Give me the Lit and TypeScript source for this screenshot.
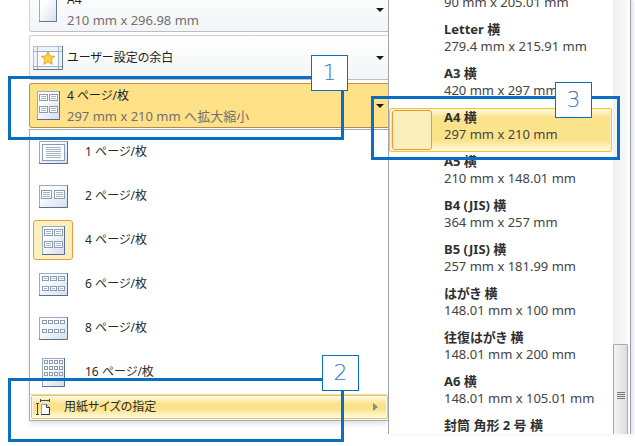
import { LitElement, html, svg, css, nothing } from "lit";
import { customElement, property } from "lit/decorators.js";
import { classMap } from "lit/directives/class-map.js";

interface Layout {
  pages: number;
  cols: number;
  rows: number;
  tall?: boolean;
}

const LAYOUTS: Layout[] = [
  { pages: 1, cols: 1, rows: 1 },
  { pages: 2, cols: 2, rows: 1 },
  { pages: 4, cols: 2, rows: 2, tall: true },
  { pages: 6, cols: 3, rows: 2 },
  { pages: 8, cols: 4, rows: 2 },
  { pages: 16, cols: 4, rows: 3, tall: true },
];

const PAPERS: [string, string][] = [
  ["", "90 mm x 205.01 mm"],
  ["Letter 横", "279.4 mm x 215.91 mm"],
  ["A3 横", "420 mm x 297 mm"],
  ["A4 横", "297 mm x 210 mm"],
  ["A5 横", "210 mm x 148.01 mm"],
  ["B4 (JIS) 横", "364 mm x 257 mm"],
  ["B5 (JIS) 横", "257 mm x 181.99 mm"],
  ["はがき 横", "148.01 mm x 100 mm"],
  ["往復はがき 横", "148.01 mm x 200 mm"],
  ["A6 横", "148.01 mm x 105.01 mm"],
  ["封筒 角形 2 号 横", ""],
];

/* Sheet thumbnail divided into cols x rows miniature pages. */
@customElement("sheet-icon")
export class SheetIcon extends LitElement {
  @property({ type: Number }) cols = 1;
  @property({ type: Number }) rows = 1;
  @property({ type: Boolean }) tall = false;

  static styles = css`
    :host { display: block; }
    svg { display: block; }
  `;

  private grid() {
    const { cols, tall } = this;
    if (cols === 2) {
      return tall
        ? { x0: 2, y0: 3, w: 8, h: 6, stepX: 10, stepY: 12 }
        : { x0: 2, y0: 5, w: 10, h: 8, stepX: 13, stepY: 12 };
    }
    if (cols === 3) return { x0: 3, y0: 3, w: 6, h: 4, stepX: 8, stepY: 10 };
    return tall
      ? { x0: 2, y0: 2, w: 3, h: 3, stepX: 5, stepY: 6 }
      : { x0: 3, y0: 3, w: 4, h: 3, stepX: 6, stepY: 9 };
  }

  private cells() {
    const { cols, rows } = this;
    if (cols === 1) {
      return svg`<rect x="3.5" y="3.5" width="22" height="16" fill="#fff" stroke="#8a9cb8"/>
        ${[6, 8, 10, 12, 14, 16].map((y) => svg`<path d="M7 ${y}.5H22" stroke="#a9b4c4"/>`)}`;
    }
    const { x0, y0, w, h, stepX, stepY } = this.grid();
    const out = [];
    for (let r = 0; r < rows; r++) {
      for (let c = 0; c < cols; c++) {
        const x = x0 + c * stepX;
        const y = y0 + r * stepY;
        out.push(svg`<rect x=${x + 0.5} y=${y + 0.5} width=${w} height=${h} fill="#fff" stroke="#8a9cb8"/>`);
        if (cols === 2) {
          for (let l = 2; l < h - 1; l += 2) {
            out.push(svg`<path d="M${x + 2} ${y + l + 0.5}h${w - 3}" stroke="#a9b4c4"/>`);
          }
        } else if (cols === 3) {
          out.push(svg`<path d="M${x + 2} ${y + 2.5}h3" stroke="#a9b4c4"/>`);
        }
      }
    }
    return out;
  }

  render() {
    const w = this.tall ? 23 : 29;
    const h = this.tall ? 29 : 23;
    return html`<svg width=${w} height=${h} viewBox="0 0 ${w} ${h}" aria-hidden="true">
      <defs>
        <linearGradient id="g" x1="0" y1="0" x2="1" y2="1">
          <stop offset="0.3" stop-color="#fdfeff" /><stop offset="1" stop-color="#d3ddec" />
        </linearGradient>
      </defs>
      <rect x="0.5" y="0.5" width=${w - 1} height=${h - 1} fill="url(#g)" stroke="#98aac4" />
      <path d="M${w - 0.5} 0V${h - 0.5}H0" fill="none" stroke="#5b7090" />
      ${this.cells()}
    </svg>`;
  }
}

@customElement("step-callout")
export class StepCallout extends LitElement {
  @property() step = "";

  static styles = css`
    :host {
      display: block;
      box-sizing: border-box;
      border: 3px solid #0a6fc0;
      pointer-events: none;
    }
    .tag {
      position: absolute;
      top: var(--tag-top);
      right: var(--tag-right);
      box-sizing: border-box;
      width: 37px;
      height: 36px;
      border: 1px solid #0a6fc0;
      background: #fff;
      color: #3b76c2;
      font: 200 22px/34px "DejaVu Sans", sans-serif;
      text-align: center;
    }
  `;

  render() {
    return html`<span class="tag">${this.step}</span>`;
  }
}

@customElement("app-root")
export class AppRoot extends LitElement {
  static styles = css`
    :host {
      display: block;
      background: #fff;
      color: #2b2b2b;
      font: 13px/20px "Noto Sans", "Noto Sans CJK JP", sans-serif;
      font-feature-settings: "palt";
    }
    .page {
      display: grid;
      grid-template-columns: 359fr 247fr;
      box-sizing: border-box;
      height: 100vh;
      min-height: 434px;
      padding: 0 0 12px 29px;
      overflow: hidden;
    }
    button {
      box-sizing: border-box;
      margin: 0;
      padding: 0;
      border: 0;
      background: none;
      color: inherit;
      font: inherit;
      font-feature-settings: inherit;
      text-align: left;
      white-space: nowrap;
    }
    .settings {
      display: flex;
      flex-direction: column;
      gap: 3px;
      margin-top: -13px;
    }
    .host { position: relative; }
    .field {
      display: flex;
      align-items: center;
      gap: 1px;
      width: 100%;
      height: 45px;
      border: 1px solid #cfd2da;
      border-bottom-color: #b9bdc8;
      border-right: 0;
      border-radius: 3px 0 0 3px;
      background: linear-gradient(#fff, #f3f4f6);
    }
    .field.open {
      border-color: #c98f3c;
      border-bottom-color: #b08a58;
      background: #ffe188;
    }
    .slot {
      display: flex;
      justify-content: center;
      width: 36px;
    }
    .words {
      display: flex;
      flex: 1;
      flex-direction: column;
    }
    .title, .choice, .more { font-size: 12px; }
    .field .words { color: #1e1e1e; }
    .field .sub { color: #707070; }
    .caret {
      margin-right: 4px;
      border: 4px solid transparent;
      border-top-color: #1a1a1a;
      border-bottom: 0;
    }
    .menu {
      display: flex;
      flex-direction: column;
      margin-top: -2px;
      padding: 0 0 1px;
      border: 1px solid #a4a9b3;
      border-right: 0;
      box-shadow: 0 4px 5px -1px #e2dfee;
    }
    .choice {
      display: flex;
      align-items: center;
      gap: 12px;
      height: 44px;
      padding-left: 3px;
    }
    .thumb {
      display: flex;
      align-items: center;
      justify-content: center;
      box-sizing: border-box;
      width: 40px;
      height: 40px;
    }
    .thumb.on, .swatch {
      border: 1px solid #ea9a3e;
      border-radius: 3px;
      background: #fbefbd;
    }
    .more {
      display: flex;
      align-items: center;
      gap: 13px;
      width: 100%;
      height: 24px;
      padding: 0 9px 0 4px;
      border: 1px solid #f3c444;
      border-radius: 2px;
      background: linear-gradient(#fffbe6, #fbe38c 35%, #fbe38c 60%, #fffbe0);
      box-shadow: inset 0 0 0 1px #fffbe6;
    }
    .bottom {
      padding-left: 1px;
      border-top: 1px solid #dcdee2;
    }
    .more .label { flex: 1; }
    .right {
      border: 4px solid transparent;
      border-left: 5px solid #8a8a86;
      border-right: 0;
    }
    .papers {
      display: flex;
      gap: 1px;
      min-height: 0;
      margin-right: 4px;
      padding-right: 2px;
      border-left: 1px solid #a0a5b0;
      border-right: 1px solid #9a9dac;
      box-shadow: 3px 0 3px #e6e6f4;
    }
    .list {
      flex: 1;
      min-width: 0;
      margin: -24px 0 0;
      padding: 0;
      list-style: none;
    }
    .clip {
      display: flex;
      flex: 1;
      min-width: 0;
      height: 100%;
      clip-path: inset(0 -40px 0 -40px);
    }
    .paper {
      display: flex;
      gap: 12px;
      width: 100%;
      height: 44px;
      padding: 0 2px;
      border: 1px solid transparent;
      border-radius: 2px;
      color: #444;
      line-height: 17px;
    }
    .paper.on {
      border-color: #f3c444;
      background: linear-gradient(#fffbe6, #fbe38c 20%, #fbe38c 75%, #fffbe0);
      box-shadow: inset 0 0 0 1px #fff3c0;
    }
    .paper .words { align-self: flex-start; }
    .swatch, .blank {
      box-sizing: border-box;
      align-self: center;
      width: 40px;
      height: 40px;
    }
    .name {
      min-height: 17px;
      color: #303030;
      font-weight: 700;
    }
    .bar {
      display: flex;
      flex-direction: column;
      justify-content: flex-end;
      width: 15px;
      overflow: hidden;
      background: linear-gradient(90deg, #f0f0f0, #fafafa);
    }
    .grip {
      display: flex;
      flex-direction: column;
      align-items: center;
      justify-content: center;
      gap: 1px;
      box-sizing: border-box;
      height: 103px;
      margin-bottom: -13px;
      border: 1px solid #a9a9ad;
      border-radius: 1px;
      background: linear-gradient(90deg, #f4f4f4, #dcdce0);
    }
    .line {
      width: 8px;
      height: 1px;
      background: #77777c;
    }
    step-callout {
      position: absolute;
      z-index: 2;
    }
    .c1 {
      inset: -7px 44px -12px -21px;
      --tag-top: -24px;
      --tag-right: -7px;
    }
    .c2 {
      inset: -17px 44px -23px -22px;
      --tag-top: -26px;
      --tag-right: -18px;
    }
    .c3 {
      inset: -12px -8px -8px -18px;
      --tag-top: -17px;
      --tag-right: 25px;
    }
  `;

  private starIcon() {
    return html`<svg width="30" height="24" viewBox="0 0 30 24" aria-hidden="true">
      <rect x="0.5" y="0.5" width="29" height="23" fill="#eef2f8" stroke="#b4c0d2" />
      <path d="M4 5h22v15H4z" fill="#fbfcff" />
      <path d="M0 5.500H29M0 20.500H29M4.500 0V23M25.500 0V23" stroke="#9fb0ca" fill="none" />
      <path d="M29.500 0V23.500H0" stroke="#627895" fill="none" />
      <path d="M15 5.500l2 4.400 4.700.5-3.500 3.200 1 4.700-4.200-2.400-4.200 2.400 1-4.700-3.500-3.200 4.700-.5z" fill="#ffd23d" stroke="#d99b1c" stroke-width=".8" />
    </svg>`;
  }

  private portraitIcon() {
    return html`<svg width="18" height="25" viewBox="0 0 18 25" aria-hidden="true">
      <defs>
        <linearGradient id="p" x1="0" y1="0" x2="1" y2="1">
          <stop offset="0.3" stop-color="#fdfeff" /><stop offset="1" stop-color="#d7e0ee" />
        </linearGradient>
      </defs>
      <rect x="0.5" y="0.5" width="17" height="24" fill="url(#p)" stroke="#98aac4" />
      <path d="M17.500 0V24.500H0" stroke="#627895" fill="none" />
    </svg>`;
  }

  private measureIcon() {
    return html`<svg width="15" height="17" viewBox="0 0 15 17" aria-hidden="true">
      <path d="M1.500 4V16M0 4.500H3M0 15.500H3M4.500 0V3M13.500 0V3M4.500 1.500H13.500" stroke="#3b4a66" fill="none" />
      <path d="M5.500 5.500H10.500L13.500 8.500V15.500H5.500z" fill="#fff" stroke="#8b9bb8" />
      <path d="M10.500 5.500V8.500H14M13.500 8V16M5 15.500H14" stroke="#2c3a55" fill="none" />
    </svg>`;
  }

  private field(icon: unknown, title: string, sub = "", open = false) {
    return html`<button class=${classMap({ field: true, open })} aria-haspopup="true">
      <span class="slot">${icon}</span>
      <span class="words"><span class="title">${title}</span>${sub ? html`<span class="sub">${sub}</span>` : nothing}</span>
      <span class="caret"></span>
    </button>`;
  }

  render() {
    return html`<main class="page">
      <section class="settings">
        ${this.field(this.portraitIcon(), "A4", "210 mm x 296.98 mm")}
        ${this.field(this.starIcon(), "ユーザー設定の余白")}
        <div class="host">
          ${this.field(html`<sheet-icon cols="2" rows="2" tall></sheet-icon>`, "4 ページ/枚", "297 mm x 210 mm へ拡大縮小", true)}
          <step-callout class="c1" step="1"></step-callout>
        </div>
        <div class="menu">
          ${LAYOUTS.map(
            (l) => html`<button class="choice">
              <span class=${classMap({ thumb: true, on: l.pages === 4 })}>
                <sheet-icon .cols=${l.cols} .rows=${l.rows} .tall=${!!l.tall}></sheet-icon>
              </span>
              <span>${l.pages} ページ/枚</span>
            </button>`
          )}
          <div class="host bottom">
            <button class="more" aria-haspopup="true">
              ${this.measureIcon()}<span class="label">用紙サイズの指定</span><span class="right"></span>
            </button>
            <step-callout class="c2" step="2"></step-callout>
          </div>
        </div>
      </section>
      <section class="papers">
        <div class="clip">
          <ul class="list">
            ${PAPERS.map(([name, size]) => {
              const on = name === "A4 横";
              return html`<li class="host">
                <button class=${classMap({ paper: true, on })}>
                  <span class=${on ? "swatch" : "blank"}></span>
                  <span class="words"><span class="name">${name}</span><span>${size}</span></span>
                </button>
                ${on ? html`<step-callout class="c3" step="3"></step-callout>` : nothing}
              </li>`;
            })}
          </ul>
        </div>
        <div class="bar">
          <div class="grip">
            <span class="line"></span><span class="line"></span><span class="line"></span><span class="line"></span>
          </div>
        </div>
      </section>
    </main>`;
  }
}
